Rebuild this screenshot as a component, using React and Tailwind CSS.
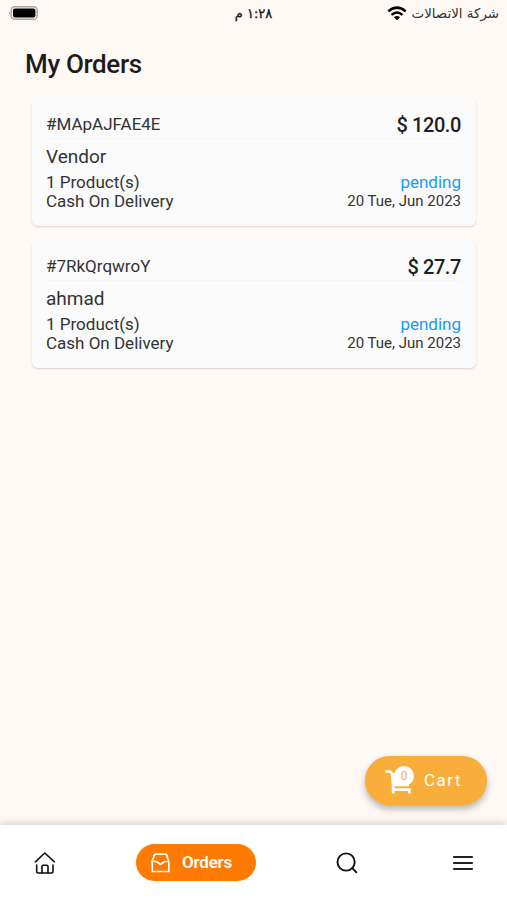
import React from "react";

const orders = [
  {
    id: "#MApAJFAE4E",
    vendor: "Vendor",
    total: "$ 120.0",
    products: 1,
    payment: "Cash On Delivery",
    status: "pending",
    date: "20 Tue, Jun 2023",
  },
  {
    id: "#7RkQrqwroY",
    vendor: "ahmad",
    total: "$ 27.7",
    products: 1,
    payment: "Cash On Delivery",
    status: "pending",
    date: "20 Tue, Jun 2023",
  },
];

const StatusBar = () => (
  <div className="h-7 shrink-0 grid grid-cols-3 items-center pl-[8px] pr-[8px] text-[#111]">
    <svg width="31" height="16" viewBox="0 0 31 16" className="relative -top-px">
      <path d="M2 6.2 Q0 8 2 9.8Z" fill="#999" />
      <rect x="3.2" y="1.7" width="26" height="12.6" rx="3.5" fill="#f5f2ef" stroke="#aaa8a6" strokeWidth="1.4" />
      <rect x="5" y="3.4" width="22.4" height="9.2" rx="2" fill="#000" />
    </svg>
    <span
      dir="rtl"
      className="justify-self-center font-['DejaVu_Sans',sans-serif] text-[13px] leading-7 whitespace-nowrap [-webkit-text-stroke:0.3px_#111]"
    >
      ١:٢٨ م
    </span>
    <div className="flex items-center justify-end gap-[5px]">
      <svg width="20" height="15" viewBox="0 0 20 15" className="relative -top-px">
        <g fill="none" stroke="#000" strokeWidth="2.5">
          <path d="M1.3 5.4 Q10 -2.2 18.7 5.4" />
          <path d="M4.5 8.9 Q10 4 15.5 8.9" />
        </g>
        <path d="M10 14.2 L6.9 11.2 Q10 8.6 13.1 11.2Z" fill="#000" />
      </svg>
      <span
        dir="rtl"
        className="font-['DejaVu_Sans',sans-serif] text-[13.4px] leading-7 whitespace-nowrap text-[#333]"
      >
        شركة الاتصالات
      </span>
    </div>
  </div>
);

const OrderCard = ({ order }) => (
  <div className="h-[128px] pl-[14px] pr-[15px] pt-[13px] bg-[#fafafa] rounded-md shadow-[0_1px_2px_rgba(0,0,0,0.16)] text-[#333]">
    <div className="h-[28px] flex items-center justify-between border-b border-[#f4f4f4]">
      <span className="pt-px text-[17px]">{order.id}</span>
      <span className="text-[20px] font-medium tracking-[-0.4px] text-[#1f1f1f]">
        {order.total}
      </span>
    </div>
    <p className="mt-[5px] text-[19px] leading-[25px]">{order.vendor}</p>
    <div className="mt-[4px] flex items-center justify-between text-[17px] leading-[19px]">
      <span>{order.products} Product(s)</span>
      <span className="text-[#169cf0]">{order.status}</span>
    </div>
    <div className="flex items-center justify-between leading-[19px]">
      <span className="text-[17px]">{order.payment}</span>
      <span className="text-[15px]">{order.date}</span>
    </div>
  </div>
);

const CartButton = () => (
  <button className="absolute left-[365px] top-[756px] w-[122px] h-[49px] flex items-center pl-[20px] rounded-full bg-[#f9ae3b] text-white shadow-[0_4px_7px_rgba(0,0,0,0.28)]">
    <span className="relative w-[30px] h-[30px]">
      <svg width="30" height="30" viewBox="0 0 30 30">
        <path
          d="M0.5 5.5 H4.6 Q6.6 6 7.2 9 L8 19.5"
          fill="none"
          stroke="#fff"
          strokeWidth="2.4"
          strokeLinejoin="round"
        />
        <path d="M6 7 H14 L24 19 V20.2 H7.2Z" fill="#fff" />
        <path
          d="M8.2 19 V27.6 M24.3 22.5 V27.6 M7 23.7 H25.4"
          fill="none"
          stroke="#fff"
          strokeWidth="2.8"
        />
      </svg>
      <span className="absolute left-[9px] top-0 w-5 h-5 rounded-full bg-white flex items-center justify-center text-[12px] text-[#f9ae3b]">
        0
      </span>
    </span>
    <span className="ml-[9px] text-[17px] tracking-[1.5px]">Cart</span>
  </button>
);

const BottomNav = () => (
  <nav className="h-[75px] shrink-0 flex items-center bg-white shadow-[0_-2px_8px_rgba(0,0,0,0.16)] text-[#111]">
    <div className="w-[136px] pl-[34px]">
      <svg width="22" height="24" viewBox="0 0 22 24" fill="none" stroke="currentColor" strokeWidth="1.6" strokeLinecap="round" strokeLinejoin="round">
        <path d="M1.4 10.8 L10.8 2 L20.4 10.8" />
        <path d="M2.7 14 V20.5 Q2.7 22 4.2 22 H17.5 Q19 22 19 20.5 V14" />
        <path d="M8 22 V15.5 Q8 14.2 9.3 14.2 H12.7 Q14 14.2 14 15.5 V22" />
      </svg>
    </div>
    <div className="w-[120px] h-[37px] flex items-center pl-[15px] rounded-full bg-[#ff7a00] text-white">
      <svg width="19" height="20" viewBox="0 0 19 20" fill="none" stroke="currentColor" strokeWidth="1.7" strokeLinejoin="round">
        <path d="M1.2 8.5 L3.1 2.4 Q3.5 1.2 4.8 1.2 H14.2 Q15.5 1.2 15.9 2.4 L17.8 8.5 V18.5 H1.2Z" />
        <path d="M1.2 8.5 H5.5 L9.5 11.5 L13.5 8.5 H17.8" />
      </svg>
      <span className="ml-[12px] text-[17px] font-semibold tracking-[-0.2px]">
        Orders
      </span>
    </div>
    <div className="w-[196px] pl-[80px]">
      <svg width="22" height="22" viewBox="0 0 22 22" fill="none" stroke="currentColor" strokeWidth="1.9" strokeLinecap="round">
        <circle cx="10.1" cy="10" r="8.6" />
        <path d="M16.3 16.2 L20.4 20.3" />
      </svg>
    </div>
    <svg width="22" height="18" viewBox="0 0 22 18" stroke="#222" strokeWidth="2.2" strokeLinecap="round">
      <path d="M2 3 H20 M2 9 H20 M2 15 H20" />
    </svg>
  </nav>
);

const App = () => {
  return (
    <div className="relative w-[507px] h-[900px] flex flex-col overflow-hidden bg-[#fef9f5] font-[Roboto,sans-serif]">
      <StatusBar />
      <main className="flex-1">
        <h1 className="mt-[20px] pl-[25px] text-[26px] leading-[32px] font-medium tracking-[-0.35px] text-[#1c1c1c]">
          My Orders
        </h1>
        <div className="mt-[18px] pl-[32px] pr-[31px] flex flex-col gap-[14px]">
          {orders.map((order) => (
            <OrderCard key={order.id} order={order} />
          ))}
        </div>
      </main>
      <BottomNav />
      <CartButton />
    </div>
  );
};

export default App;
